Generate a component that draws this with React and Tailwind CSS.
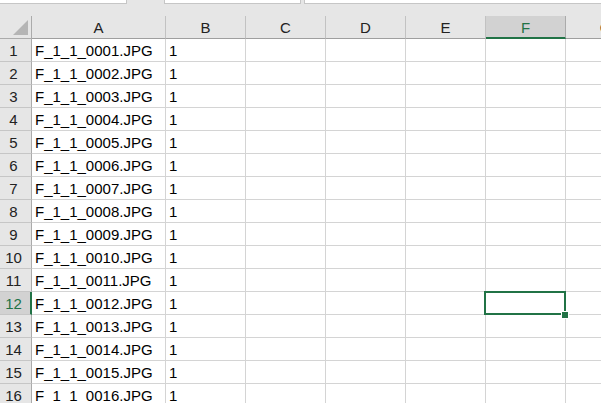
import React from 'react';

// Excel-style sheet: column A holds file names, B holds 1, F12 selected
const cols = ['A', 'B', 'C', 'D', 'E', 'F', 'G'];
const rows = Array.from({ length: 16 }, (_, i) => i + 1);
const green = 'text-[#217346]';

const fileName = (n) => `F_1_1_${String(n).padStart(4, '0')}.JPG`;

const App = () => {
    return (
        <div
            className="w-[601px] h-[403px] overflow-hidden bg-white text-black select-none"
            style={{ fontFamily: '"Liberation Sans", Arial, sans-serif' }}
        >
            {/* Remnants of the formula bar above the grid */}
            <div className="h-[16px] bg-[#e6e6e6] flex items-start">
                <div className="w-[127px] h-[4px] bg-white border-r border-b border-[#c6c6c6]" />
                <div className="ml-[37px] w-[137px] h-[4px] bg-white border-x border-b border-[#c6c6c6]" />
                <div className="ml-[3px] flex-1 h-[4px] bg-white border-l border-b border-[#c6c6c6]" />
            </div>

            <div className="grid grid-cols-[32px_134px_80px_80px_80px_80px_80px_80px] w-[646px] text-[15px] leading-none">
                {/* Header row */}
                <div className="h-[23px] bg-[#e6e6e6] border-r border-b border-[#ababab] flex items-end justify-end pr-[3px] pb-[3px]">
                    <svg width="15" height="15" viewBox="0 0 15 15">
                        <polygon points="15,0 15,15 0,15" fill="#b5b5b5" />
                    </svg>
                </div>
                {cols.map((c) =>
                    c === 'F' ? (
                        <div key={c} className={`h-[23px] bg-[#d2d2d2] border-r border-[#ababab] border-b-2 border-b-[#217346] flex items-center justify-center pt-[1px] ${green}`}>
                            {c}
                        </div>
                    ) : (
                        <div key={c} className="h-[23px] bg-[#e6e6e6] border-r border-r-[#c2c2c2] border-b border-b-[#9f9f9f] flex items-center justify-center pt-[1px] text-[#222]">
                            {c}
                        </div>
                    )
                )}

                {/* Data rows */}
                {rows.map((r) => (
                    <React.Fragment key={r}>
                        {r === 12 ? (
                            <div className={`h-[23px] bg-[#d2d2d2] border-b border-b-[#c6c6c6] border-r-2 border-r-[#217346] flex items-center justify-center pr-[3px] pt-[1px] ${green}`}>
                                {r}
                            </div>
                        ) : (
                            <div className="h-[23px] bg-[#e6e6e6] border-b border-b-[#c6c6c6] border-r border-r-[#ababab] flex items-center justify-center pr-[4px] pt-[1px] text-[#222]">
                                {r}
                            </div>
                        )}
                        <div className="h-[23px] border-r border-b border-[#d4d4d4] flex items-center pl-[3px] pt-[1px] whitespace-nowrap overflow-hidden">
                            {fileName(r)}
                        </div>
                        <div className="h-[23px] border-r border-b border-[#d4d4d4] flex items-center pl-[3px] pt-[1px]">
                            1
                        </div>
                        <div className="h-[23px] border-r border-b border-[#d4d4d4]" />
                        <div className="h-[23px] border-r border-b border-[#d4d4d4]" />
                        <div className="h-[23px] border-r border-b border-[#d4d4d4]" />
                        <div className="relative h-[23px] border-r border-b border-[#d4d4d4]">
                            {r === 12 && (
                                <>
                                    <div className="absolute -left-[2px] -top-[1px] w-[82px] h-[24px] border-2 border-[#217346] z-10" />
                                    <div className="absolute left-[75px] top-[19px] w-[8px] h-[8px] bg-[#217346] border border-white z-20" />
                                </>
                            )}
                        </div>
                        <div className="h-[23px] border-r border-b border-[#d4d4d4]" />
                    </React.Fragment>
                ))}
            </div>
        </div>
    );
};

export default App;
